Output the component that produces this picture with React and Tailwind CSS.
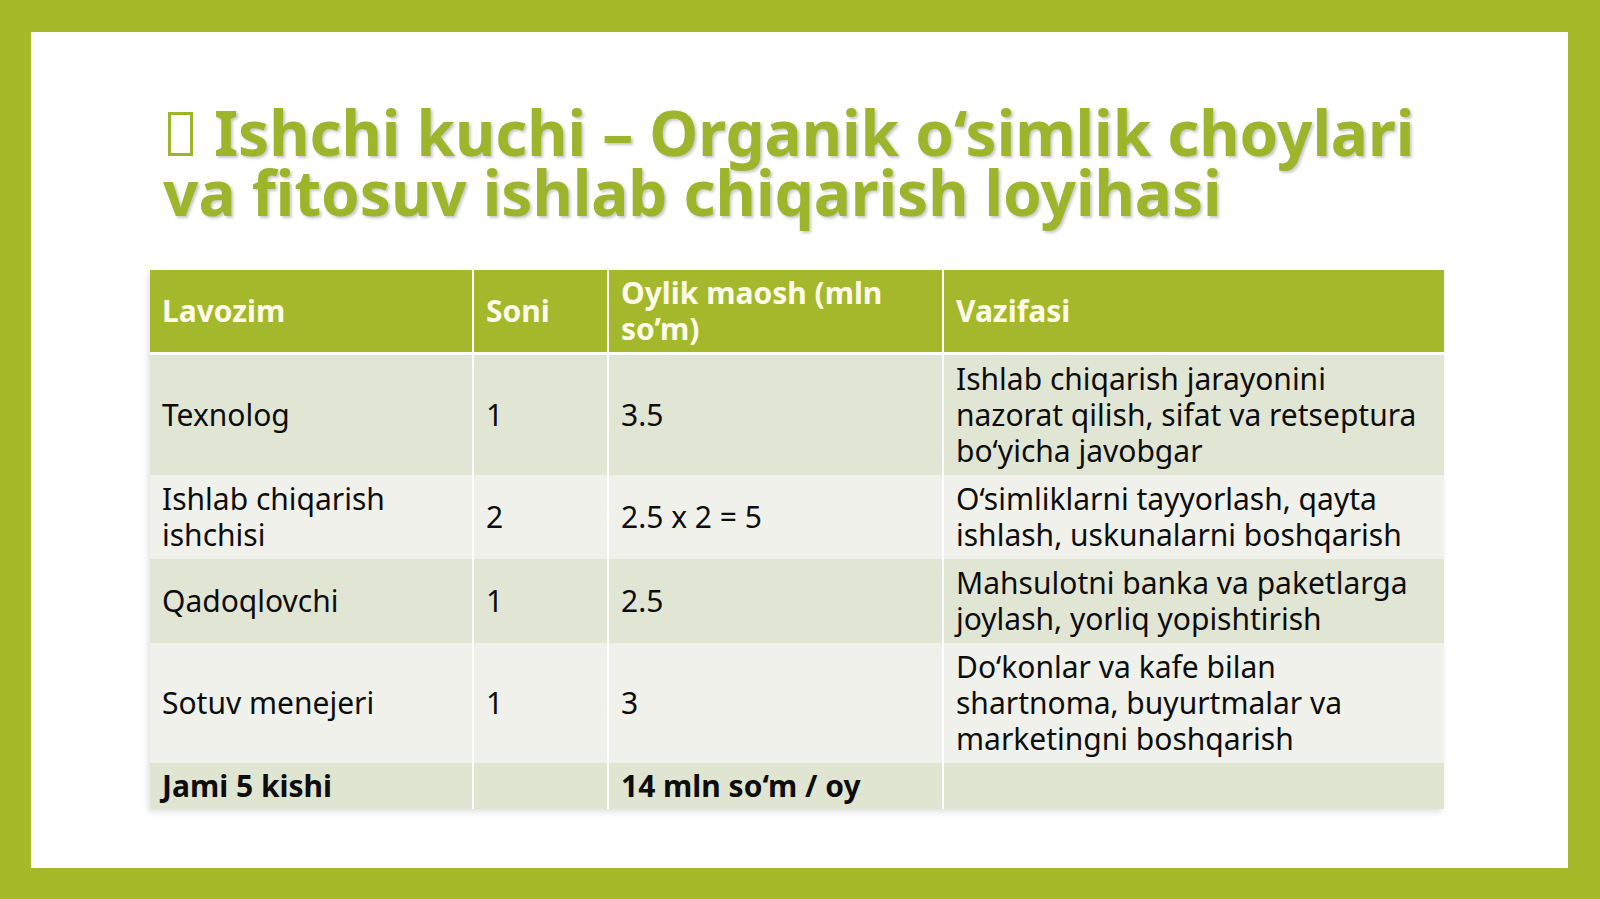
import React from "react";

const rows = [
  {
    role: "Texnolog",
    count: "1",
    pay: "3.5",
    task: ["Ishlab chiqarish jarayonini", "nazorat qilish, sifat va retseptura", "bo‘yicha javobgar"],
    bg: "bg-[#e1e6d4]",
  },
  {
    role: ["Ishlab chiqarish", "ishchisi"],
    count: "2",
    pay: "2.5 x 2 = 5",
    task: ["O‘simliklarni tayyorlash, qayta", "ishlash, uskunalarni boshqarish"],
    bg: "bg-[#eff1ea]",
  },
  {
    role: "Qadoqlovchi",
    count: "1",
    pay: "2.5",
    task: ["Mahsulotni banka va paketlarga", "joylash, yorliq yopishtirish"],
    bg: "bg-[#e1e6d4]",
  },
  {
    role: "Sotuv menejeri",
    count: "1",
    pay: "3",
    task: ["Do‘konlar va kafe bilan", "shartnoma, buyurtmalar va", "marketingni boshqarish"],
    bg: "bg-[#eff1ea]",
  },
];

const Lines = ({ value }) =>
  Array.isArray(value)
    ? value.map((line, i) => (
        <React.Fragment key={i}>
          {line}
          {i < value.length - 1 && <br />}
        </React.Fragment>
      ))
    : value;

const App = () => {
  return (
    <div className="w-full h-[899px] bg-[#a5ba28] pt-[32px] pl-[31px] pr-[32px] pb-[31px] font-['Noto_Sans','Open_Sans',sans-serif]">
      <div className="w-full h-full bg-white pl-[132px] pt-[70px]">
        <h1 className="text-[62px] leading-[60px] font-bold text-[#9db52b] [text-shadow:2px_2px_3px_rgba(0,0,0,0.22)]">
          <span className="inline-block align-[0px] ml-[5px] w-[25px] h-[44px] border-[3px] border-[#9db52b] mr-[21px]" />
          Ishchi kuchi – Organik o‘simlik choylari
          <br />
          va fitosuv ishlab chiqarish loyihasi
        </h1>

        <table className="mt-[48px] ml-[-13px] table-fixed border-collapse w-[1294px] text-[30px] leading-[36px] text-[#0d0d0d] shadow-[-2px_3px_6px_rgba(0,0,0,0.12)]">
          <colgroup>
            <col className="w-[323px]" />
            <col className="w-[135px]" />
            <col className="w-[335px]" />
            <col className="w-[501px]" />
          </colgroup>
          <thead>
            <tr className="bg-[#a3b92b] h-[82px] text-[#fffbea] font-bold border-b-[3px] border-white">
              <th className="text-left align-middle px-[12px] py-[5px] border-r-2 border-white">Lavozim</th>
              <th className="text-left align-middle px-[12px] py-[5px] border-r-2 border-white">Soni</th>
              <th className="text-left align-middle px-[12px] py-[5px] border-r-2 border-white">
                Oylik maosh (mln so’m)
              </th>
              <th className="text-left align-middle px-[12px] py-[5px]">Vazifasi</th>
            </tr>
          </thead>
          <tbody>
            {rows.map((row, index) => (
              <tr key={index} className={row.bg}>
                <td className="align-middle px-[12px] py-[6px] border-r-2 border-white">
                  <Lines value={row.role} />
                </td>
                <td className="align-middle px-[12px] py-[6px] border-r-2 border-white">{row.count}</td>
                <td className="align-middle px-[12px] py-[6px] border-r-2 border-white">{row.pay}</td>
                <td className="align-middle px-[12px] py-[6px]">
                  <Lines value={row.task} />
                </td>
              </tr>
            ))}
            <tr className="bg-[#e0e5d2] font-bold h-[46px]">
              <td className="align-middle px-[12px] py-[5px] border-r-2 border-white">Jami 5 kishi</td>
              <td className="align-middle px-[12px] py-[5px] border-r-2 border-white"></td>
              <td className="align-middle px-[12px] py-[5px] border-r-2 border-white">14 mln so‘m / oy</td>
              <td className="align-middle px-[12px] py-[5px]"></td>
            </tr>
          </tbody>
        </table>
      </div>
    </div>
  );
};

export default App;
